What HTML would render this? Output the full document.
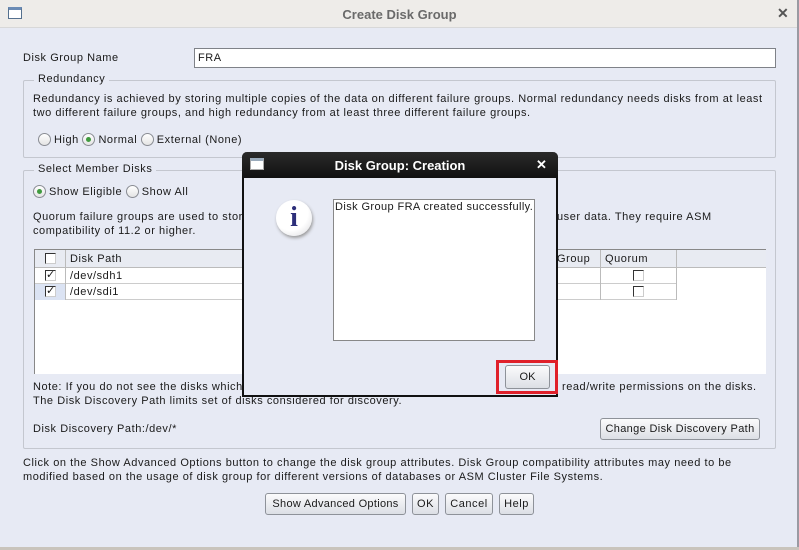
<!DOCTYPE html>
<html><head><meta charset="utf-8"><style>
*{margin:0;padding:0;box-sizing:border-box}
body{width:799px;height:550px;overflow:hidden;background:#e7eaf4;font-family:"Liberation Sans",sans-serif;font-size:11px;color:#1a1a1a;position:relative}
.a{position:absolute;white-space:nowrap}
.t{letter-spacing:0.55px}
.fs{position:absolute;border:1px solid #c4c7cf;border-radius:2px}
.lg{position:absolute;background:#e7eaf4;padding:0 4px}
.rad{display:inline-block;width:13px;height:13px;border-radius:50%;border:1px solid #8a8d94;background:linear-gradient(#fff,#e4e4e4);vertical-align:-3px;margin-right:3px;position:relative}
.rad.on::after{content:"";position:absolute;left:3px;top:3px;width:5px;height:5px;border-radius:50%;background:#3f9a3f}
.btn{position:absolute;border:1px solid #8e9299;border-radius:3px;background:linear-gradient(#fbfbfc,#dcdfe5);text-align:center;line-height:20px;font-size:11px}
.cb{position:absolute;width:11px;height:11px;border:1px solid #333;border-right-color:#ccc;border-bottom-color:#ccc;background:#fff;font-size:11px;line-height:9px;text-align:center}
</style></head><body>
<div class="a" style="left:0;top:0;width:799px;height:28px;background:#eeece9;border-bottom:1px solid #d8d8d8"></div>
<div class="a" style="left:8px;top:7px;width:14px;height:12px;border:1px solid #55708e;background:#fff;border-top:3px solid #6a8bb5"></div>
<div class="a" style="left:0;width:799px;top:7px;text-align:center;font-weight:bold;font-size:13px;color:#6a6a6a">Create Disk Group</div>
<div class="a" style="left:777px;top:5px;font-size:14px;color:#555;font-weight:bold">✕</div>
<div class="a" style="left:797px;top:0;width:2px;height:550px;background:#9a9aa2"></div>
<div class="a" style="left:0;top:547px;width:799px;height:3px;background:#c9c4bc"></div>

<div class="a t" style="left:23px;top:52px">Disk Group Name</div>
<div class="a" style="left:194px;top:48px;width:582px;height:20px;background:#fff;border:1px solid #7f8288"></div>
<div class="a t" style="left:198px;top:52px">FRA</div>

<div class="fs" style="left:23px;top:80px;width:753px;height:78px"></div>
<div class="lg t" style="left:34px;top:73px">Redundancy</div>
<div class="a t" style="left:33px;top:93px">Redundancy is achieved by storing multiple copies of the data on different failure groups. Normal redundancy needs disks from at least</div>
<div class="a t" style="left:33px;top:107px">two different failure groups, and high redundancy from at least three different failure groups.</div>
<div class="a t" style="left:38px;top:133px"><span class="rad"></span>High <span class="rad on"></span>Normal <span class="rad"></span>External (None)</div>

<div class="fs" style="left:23px;top:170px;width:753px;height:279px"></div>
<div class="lg t" style="left:34px;top:163px">Select Member Disks</div>
<div class="a t" style="left:33px;top:185px"><span class="rad on"></span>Show Eligible <span class="rad"></span>Show All</div>
<div class="a t" style="left:33px;top:211px">Quorum failure groups are used to store voting files</div>
<div class="a t" style="left:557px;top:211px">user data. They require ASM</div>
<div class="a t" style="left:33px;top:225px">compatibility of 11.2 or higher.</div>

<div class="a" style="left:34px;top:249px;width:732px;height:125px;background:#fff;border-left:1px solid #888;border-top:1px solid #888"></div>
<div class="a" style="left:35px;top:250px;width:731px;height:18px;background:#e8ebf2;border-bottom:1px solid #bbb"></div>
<div class="a" style="left:35px;top:268px;width:641px;height:16px;border-bottom:1px solid #ccc"></div>
<div class="a" style="left:35px;top:284px;width:641px;height:16px;border-bottom:1px solid #ccc"></div>
<div class="a" style="left:35px;top:284px;width:30px;height:16px;background:#dbe3f3"></div>
<div class="a" style="left:65px;top:250px;width:1px;height:50px;background:#bbb"></div>
<div class="a" style="left:600px;top:250px;width:1px;height:50px;background:#bbb"></div>
<div class="a" style="left:676px;top:250px;width:1px;height:50px;background:#bbb"></div>
<div class="cb" style="left:45px;top:253px"></div>
<div class="cb" style="left:45px;top:270px">✓</div>
<div class="cb" style="left:45px;top:286px">✓</div>
<div class="cb" style="left:633px;top:270px"></div>
<div class="cb" style="left:633px;top:286px"></div>
<div class="a t" style="left:70px;top:253px">Disk Path</div>
<div class="a t" style="left:70px;top:270px">/dev/sdh1</div>
<div class="a t" style="left:70px;top:286px">/dev/sdi1</div>
<div class="a t" style="left:557px;top:253px">Group</div>
<div class="a t" style="left:605px;top:253px">Quorum</div>

<div class="a t" style="left:33px;top:381px">Note: If you do not see the disks which you believe</div>
<div class="a t" style="left:562px;top:381px">read/write permissions on the disks.</div>
<div class="a t" style="left:33px;top:395px">The Disk Discovery Path limits set of disks considered for discovery.</div>
<div class="a t" style="left:33px;top:423px">Disk Discovery Path:/dev/*</div>
<div class="btn" style="left:600px;top:418px;width:160px;height:22px;letter-spacing:0.35px">Change Disk Discovery Path</div>

<div class="a t" style="left:23px;top:457px">Click on the Show Advanced Options button to change the disk group attributes. Disk Group compatibility attributes may need to be</div>
<div class="a t" style="left:23px;top:471px">modified based on the usage of disk group for different versions of databases or ASM Cluster File Systems.</div>
<div class="btn" style="left:265px;top:493px;width:141px;height:22px;letter-spacing:0.3px">Show Advanced Options</div>
<div class="btn t" style="left:412px;top:493px;width:27px;height:22px">OK</div>
<div class="btn t" style="left:445px;top:493px;width:48px;height:22px">Cancel</div>
<div class="btn t" style="left:499px;top:493px;width:35px;height:22px">Help</div>

<!-- dialog -->
<div class="a" style="left:242px;top:152px;width:316px;height:245px;background:#e7eaf4;border:2px solid #111;border-top:none;border-radius:5px 5px 0 0"></div>
<div class="a" style="left:242px;top:152px;width:316px;height:26px;background:linear-gradient(#2a2a2a,#111);border-radius:5px 5px 0 0"></div>
<div class="a" style="left:250px;top:158px;width:14px;height:12px;border:1px solid #aaa;background:#fff;border-top:3px solid #9ab"></div>
<div class="a" style="left:242px;width:316px;top:158px;text-align:center;color:#fff;font-weight:bold;font-size:13px">Disk Group: Creation</div>
<div class="a" style="left:536px;top:157px;color:#fff;font-size:13px;font-weight:bold">✕</div>
<div class="a" style="left:276px;top:200px;width:36px;height:36px;border-radius:50%;background:radial-gradient(circle at 40% 35%,#fff 55%,#d8d8dc);box-shadow:1px 2px 3px #999;text-align:center;font-family:'Liberation Serif',serif;font-weight:bold;font-size:28px;line-height:36px;color:#2d2f7a">i</div>
<div class="a" style="left:333px;top:199px;width:202px;height:142px;background:#fff;border:1px solid #888"></div>
<div class="a" style="left:335px;top:201px;letter-spacing:0.4px">Disk Group FRA created successfully.</div>
<div class="a" style="left:496px;top:360px;width:62px;height:34px;border:3px solid #e0202a"></div>
<div class="btn" style="left:505px;top:365px;width:45px;height:24px;line-height:22px">OK</div>
</body></html>
